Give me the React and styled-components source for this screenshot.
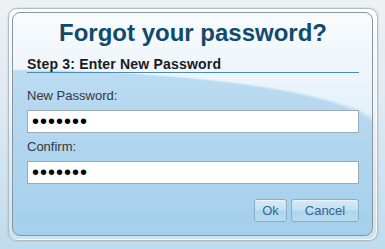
import { useEffect, useRef } from "react";
import styled, { createGlobalStyle } from "styled-components";

const GlobalStyle = createGlobalStyle`
  html, body {
    margin: 0;
    padding: 0;
  }
  body {
    width: 385px;
    height: 249px;
    overflow: hidden;
    background: linear-gradient(180deg, #edf1f4 0%, #dde9f1 45%, #bfdcef 100%);
    font-family: "Liberation Sans", Arial, sans-serif;
  }
`;

function App() {
  const confirmRef = useRef(null);

  useEffect(() => {
    const el = confirmRef.current;
    if (el) {
      el.focus();
      el.setSelectionRange(el.value.length, el.value.length);
    }
  }, []);

  return (
    <>
      <GlobalStyle />
      <Frame>
        <Panel>
          <Title>Forgot your password?</Title>
          <StepHeading>Step 3: Enter New Password</StepHeading>
          <Label htmlFor="new-password" $gap={15}>New Password:</Label>
          <PasswordInput id="new-password" type="password" defaultValue="secret1" />
          <Label htmlFor="confirm-password" $gap={6}>Confirm:</Label>
          <PasswordInput
            id="confirm-password"
            ref={confirmRef}
            type="password"
            defaultValue="secret1"
          />
          <ButtonRow>
            <Button $width={33}>Ok</Button>
            <Button $width={68}>Cancel</Button>
          </ButtonRow>
        </Panel>
      </Frame>
    </>
  );
}

const Frame = styled.div`
  box-sizing: border-box;
  width: 370px;
  height: 233px;
  margin: 8px;
  padding: 3px;
  border: 1px solid #b3bbc2;
  border-radius: 9px;
  background: linear-gradient(180deg, #fbfcfd 0%, #eef5fa 40%, #cae4f4 100%);
  box-shadow: 0 0 2px rgba(90, 110, 125, 0.35),
    inset -1px -1px 0 rgba(255, 255, 255, 0.8);
`;

const Panel = styled.div`
  box-sizing: border-box;
  width: 361px;
  height: 224px;
  display: flex;
  flex-direction: column;
  padding: 6px 13px 0 14px;
  border: 1px solid #8b959d;
  border-radius: 8px;
  background:
    radial-gradient(
        ellipse 385px 63px at -12px 119px,
        rgba(98, 172, 222, 0.36) 97%,
        rgba(98, 172, 222, 0) 100%
      )
      0 0 / 100% 119px no-repeat,
    linear-gradient(rgba(98, 172, 222, 0.36), rgba(98, 172, 222, 0.36)) 0 119px /
      100% 100% no-repeat,
    linear-gradient(180deg, #f8fbfd 0%, #eef6fb 25%, #c8e4f4 100%);
`;

const Title = styled.h1`
  margin: 0;
  font-size: 24px;
  line-height: 28px;
  font-weight: 700;
  text-align: center;
  color: #114a6c;
`;

const StepHeading = styled.h2`
  margin: 9px 0 0;
  padding: 0;
  font-size: 14px;
  line-height: 16px;
  font-weight: 700;
  letter-spacing: 0.2px;
  color: #1c1a20;
  border-bottom: 1px solid #4a8db3;
`;

const Label = styled.label`
  display: block;
  margin-top: ${(props) => props.$gap}px;
  font-size: 13px;
  line-height: 15px;
  color: #363542;
`;

const PasswordInput = styled.input`
  box-sizing: border-box;
  display: block;
  width: 100%;
  height: 23px;
  margin: 7px 0 0;
  padding: 0 4px;
  border: 1px solid #9aabb7;
  border-radius: 0;
  background: #fff;
  font-family: "Liberation Sans", Arial, sans-serif;
  font-size: 20px;
  letter-spacing: 1px;
  color: #000;
  caret-color: #000;
  outline: none;
`;

const ButtonRow = styled.div`
  display: flex;
  justify-content: flex-end;
  gap: 4px;
  margin-top: 15px;
`;

const Button = styled.button`
  box-sizing: border-box;
  width: ${(props) => props.$width}px;
  height: 23px;
  padding: 0;
  border: 1px solid #8cadc6;
  border-radius: 3px;
  background: linear-gradient(180deg, #d6eaf7 0%, #c3e0f2 48%, #aed4ed 52%, #b9dbf0 100%);
  box-shadow: inset 0 1px 0 rgba(255, 255, 255, 0.55);
  font-family: "Liberation Sans", Arial, sans-serif;
  font-size: 13px;
  color: #2f6996;
  cursor: pointer;
`;

export default App;
